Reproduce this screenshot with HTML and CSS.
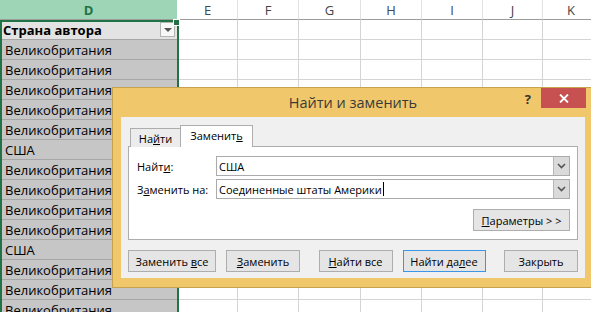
FILE: index.html
```html
<!DOCTYPE html>
<html>
<head>
  <meta charset="utf-8">
  <link rel="stylesheet" href="styles.css">
</head>
<body>
  <table class="sheet">
    <colgroup>
      <col class="w-d"><col class="w-60"><col class="w-61"><col class="w-62"><col class="w-61"><col class="w-61"><col class="w-60"><col class="w-rest">
    </colgroup>
    <tr class="col-heads"><th class="sel">D</th><th>E</th><th>F</th><th>G</th><th>H</th><th>I</th><th>J</th><th>K</th></tr>
    <tr><td class="d head"><div class="head-cell"><span>Страна автора</span><span class="filter"></span></div></td><td></td><td></td><td></td><td></td><td></td><td></td><td></td></tr>
    <tr><td class="d">Великобритания</td><td></td><td></td><td></td><td></td><td></td><td></td><td></td></tr>
    <tr><td class="d">Великобритания</td><td></td><td></td><td></td><td></td><td></td><td></td><td></td></tr>
    <tr><td class="d">Великобритания</td><td></td><td></td><td></td><td></td><td></td><td></td><td></td></tr>
    <tr><td class="d">Великобритания</td><td></td><td></td><td></td><td></td><td></td><td></td><td></td></tr>
    <tr><td class="d">Великобритания</td><td></td><td></td><td></td><td></td><td></td><td></td><td></td></tr>
    <tr><td class="d">США</td><td></td><td></td><td></td><td></td><td></td><td></td><td></td></tr>
    <tr><td class="d">Великобритания</td><td></td><td></td><td></td><td></td><td></td><td></td><td></td></tr>
    <tr><td class="d">Великобритания</td><td></td><td></td><td></td><td></td><td></td><td></td><td></td></tr>
    <tr><td class="d">Великобритания</td><td></td><td></td><td></td><td></td><td></td><td></td><td></td></tr>
    <tr><td class="d">Великобритания</td><td></td><td></td><td></td><td></td><td></td><td></td><td></td></tr>
    <tr><td class="d">США</td><td></td><td></td><td></td><td></td><td></td><td></td><td></td></tr>
    <tr><td class="d">Великобритания</td><td></td><td></td><td></td><td></td><td></td><td></td><td></td></tr>
    <tr><td class="d">Великобритания</td><td></td><td></td><td></td><td></td><td></td><td></td><td></td></tr>
    <tr><td class="d">Великобритания</td><td></td><td></td><td></td><td></td><td></td><td></td><td></td></tr>
  </table>

  <div class="selection"><span class="handle"></span></div>

  <div class="dialog">
    <div class="title-bar">
      <span></span>
      <div class="title">Найти и заменить</div>
      <div class="title-actions">
        <span class="help">?</span>
        <span class="close">
          <svg width="10" height="9" viewBox="0 0 10 9"><path d="M1 0.5 L9 8.5 M9 0.5 L1 8.5" stroke="#fff" stroke-width="1.8"/></svg>
        </span>
      </div>
    </div>

    <div class="panel">
      <div class="tabs">
        <div class="tab">На<u>й</u>ти</div>
        <div class="tab active">Заменит<u>ь</u></div>
      </div>

      <div class="tab-body">
        <div class="field-row">
          <label>Найт<u>и</u>:</label>
          <div class="field">
            <span class="value">США</span>
            <span class="drop"><svg width="9" height="6" viewBox="0 0 9 6"><path d="M1 1 L4.5 4.5 L8 1" fill="none" stroke="#555" stroke-width="1.6"/></svg></span>
          </div>
        </div>
        <div class="field-row">
          <label>З<u>а</u>менить на:</label>
          <div class="field">
            <span class="value">Соединенные штаты Америки<span class="caret"></span></span>
            <span class="drop"><svg width="9" height="6" viewBox="0 0 9 6"><path d="M1 1 L4.5 4.5 L8 1" fill="none" stroke="#555" stroke-width="1.6"/></svg></span>
          </div>
        </div>
        <div class="options">
          <button class="btn btn-options"><u>П</u>араметры &gt; &gt;</button>
        </div>
      </div>

      <div class="actions">
        <div class="group">
          <button class="btn btn-wide">Заменить <u>в</u>се</button>
          <button class="btn"><u>З</u>аменить</button>
        </div>
        <div class="group">
          <button class="btn"><u>Н</u>айти все</button>
          <button class="btn btn-next">Найти да<u>л</u>ее</button>
        </div>
        <div class="group">
          <button class="btn">Закрыть</button>
        </div>
      </div>
    </div>
  </div>
</body>
</html>
```

FILE: styles.css
```css
body {
  margin: 0;
  width: 591px;
  height: 312px;
  overflow: hidden;
  position: relative;
  background: #fff;
  font-family: 'Open Sans', 'Noto Sans', sans-serif;
  color: #000;
}

/* Spreadsheet */
.sheet {
  border-collapse: separate;
  border-spacing: 0;
  table-layout: fixed;
  width: 600px;
  font-size: 13px;
}

.w-d { width: 178px; }
.w-60 { width: 60px; }
.w-61 { width: 61px; }
.w-62 { width: 62px; }
.w-rest { width: 57px; }

.sheet th,
.sheet td {
  height: 20px;
  padding: 0;
  box-sizing: border-box;
  border-right: 1px solid #d4d4d4;
  border-bottom: 1px solid #d4d4d4;
  white-space: nowrap;
  overflow: hidden;
}

.col-heads th {
  font-weight: normal;
  color: #444;
  background: #fff;
  text-align: center;
  border-right-color: #e1e1e1;
  border-bottom-color: #9b9b9b;
}

.col-heads th.sel {
  background: #9fd5b7;
  color: #217346;
  font-weight: bold;
  border-right-color: #fff;
}

.sheet td.d {
  background: #c6c6c6;
  border-right: 1px solid #fff;
  border-bottom-color: #a6a6a6;
  padding-left: 5px;
}

.sheet td.head {
  background: #e3e3e3;
  font-weight: bold;
  padding-left: 3px;
}

.head-cell {
  display: flex;
  align-items: center;
  justify-content: space-between;
  padding-right: 2px;
}

.filter {
  width: 15px;
  height: 15px;
  box-sizing: border-box;
  border: 1px solid #b4b4b4;
  background: #f7f7f7;
  display: flex;
  align-items: center;
  justify-content: center;
}

.filter::after {
  content: '';
  border-left: 4px solid transparent;
  border-right: 4px solid transparent;
  border-top: 4px solid #555;
  margin-top: 1px;
}

.selection {
  position: absolute;
  left: 0;
  top: 20px;
  width: 179px;
  height: 300px;
  box-sizing: border-box;
  border: 2px solid #217346;
  pointer-events: none;
}

.handle {
  position: absolute;
  right: -3px;
  top: -3px;
  width: 5px;
  height: 5px;
  background: #217346;
  border: 1px solid #fff;
}

/* Find & replace dialog */
.dialog {
  position: absolute;
  left: 112px;
  top: 87px;
  width: 482px;
  box-sizing: border-box;
  background: #f0c86b;
  border: 1px solid #c7a24c;
  padding: 0 8px 9px;
  font-size: 11px;
}

.title-bar {
  height: 29px;
  display: grid;
  grid-template-columns: 1fr auto 1fr;
  align-items: center;
}

.title {
  font-size: 14.5px;
  color: #3a3a3a;
}

.title-actions {
  align-self: start;
  display: flex;
  justify-content: flex-end;
  align-items: flex-start;
  margin-right: -1px;
}

.help {
  font-weight: bold;
  font-size: 13px;
  color: #333;
  margin: 2px 10px 0 0;
}

.close {
  width: 45px;
  height: 20px;
  background: #c75050;
  display: flex;
  align-items: center;
  justify-content: center;
}

.panel {
  background: #f0f0f0;
  padding: 8px 7px 6px;
}

.tabs {
  display: flex;
  align-items: flex-end;
  padding-left: 2px;
  margin-bottom: -1px;
  height: 22px;
}

.tab {
  width: 51px;
  height: 19px;
  box-sizing: border-box;
  display: flex;
  align-items: center;
  justify-content: center;
  border: 1px solid #adadad;
  border-bottom: none;
  background: #ececec;
}

.tab.active {
  width: 73px;
  height: 22px;
  margin-left: -1px;
  background: #fff;
  padding-bottom: 2px;
  position: relative;
  z-index: 1;
}

.tab-body {
  background: #fff;
  border: 1px solid #adadad;
  padding: 9px 7px 8px 8px;
  display: flex;
  flex-direction: column;
  gap: 3px;
}

.field-row {
  display: flex;
  align-items: center;
}

.field-row label {
  width: 79px;
}

.field {
  flex: 1;
  height: 20px;
  box-sizing: border-box;
  border: 1px solid #ababab;
  background: #fff;
  display: flex;
  align-items: center;
  justify-content: space-between;
}

.value {
  padding-left: 2px;
  display: flex;
  align-items: center;
}

.caret {
  width: 1px;
  height: 14px;
  background: #000;
  margin-left: 1px;
}

.drop {
  width: 16px;
  height: 18px;
  box-sizing: border-box;
  background: #dadada;
  border-left: 1px solid #b8b8b8;
  display: flex;
  align-items: center;
  justify-content: center;
}

.options {
  display: flex;
  justify-content: flex-end;
  margin-top: 7px;
}

.actions {
  display: flex;
  justify-content: space-between;
  margin-top: 10px;
}

.group {
  display: flex;
  gap: 10px;
}

.btn {
  width: 74px;
  height: 22px;
  padding: 0;
  border: 1px solid #adadad;
  background: #e5e5e5;
  font-family: inherit;
  font-size: 11px;
  color: #000;
}

.btn-wide {
  width: 88px;
}

.btn-next {
  width: 83px;
  border-color: #3c96e6;
}

.btn-options {
  width: 97px;
}
```
